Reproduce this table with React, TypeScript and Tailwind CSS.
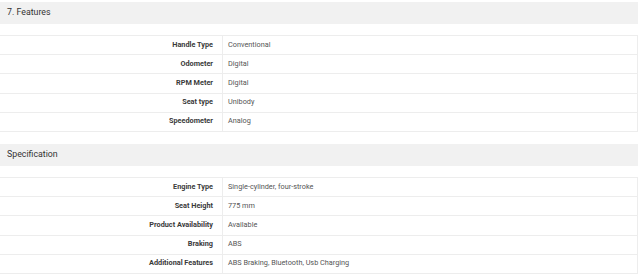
import React from 'react';

type Row = { label: string; value: string };

const features: Row[] = [
  { label: 'Handle Type', value: 'Conventional' },
  { label: 'Odometer', value: 'Digital' },
  { label: 'RPM Meter', value: 'Digital' },
  { label: 'Seat type', value: 'Unibody' },
  { label: 'Speedometer', value: 'Analog' },
];

const specification: Row[] = [
  { label: 'Engine Type', value: 'Single-cylinder, four-stroke' },
  { label: 'Seat Height', value: '775 mm' },
  { label: 'Product Availability', value: 'Available' },
  { label: 'Braking', value: 'ABS' },
  { label: 'Additional Features', value: 'ABS Braking, Bluetooth, Usb Charging' },
];

const Section: React.FC<{ title: string; rows: Row[] }> = ({ title, rows }) => (
  <section>
    <div className="h-[22px] bg-[#f1f1f1] flex items-center px-[7px] text-[8.8px] text-[#333]">
      {title}
    </div>
    <div className="mt-[11px] border-t border-r border-[#ededed]">
      {rows.map((row) => (
        <div key={row.label} className="flex h-[19.2px] border-b border-[#ededed]">
          <div className="w-[223px] shrink-0 border-r border-[#ededed] flex items-center justify-end pr-[9px] text-[7.3px] font-bold text-[#3a3a3a]">
            {row.label}
          </div>
          <div className="flex items-center pl-[5px] text-[7.3px] text-[#555]">{row.value}</div>
        </div>
      ))}
    </div>
  </section>
);

export default function App() {
  return (
    <div className="w-[640px] h-[278px] bg-white overflow-hidden pt-[2px]" style={{ fontFamily: 'Roboto, "Liberation Sans", sans-serif' }}>
      <div className="w-[638px] flex flex-col gap-[12px]">
        <Section title="7. Features" rows={features} />
        <Section title="Specification" rows={specification} />
      </div>
    </div>
  );
}
